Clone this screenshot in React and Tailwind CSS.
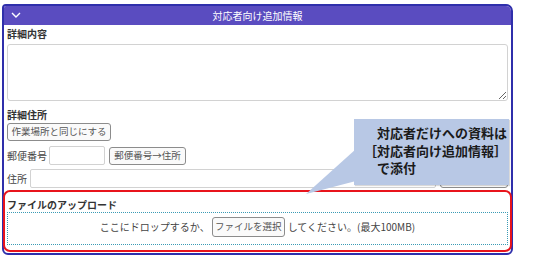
import React from 'react';

const font = { fontFamily: '"Noto Sans CJK JP", "Noto Sans", sans-serif' };

function Btn({ children, className = '' }) {
    return (
        <button className={`h-[18px] px-[3px] border border-[#8c8c8c] rounded-[3px] bg-[#fafafa] text-[9.5px] leading-none text-[#555] whitespace-nowrap flex items-center justify-center ${className}`}>
            {children}
        </button>
    );
}

export default function App() {
    return (
        <div className="relative w-[540px] h-[256px] bg-white overflow-hidden text-[#333]" style={font}>
            {/* panel */}
            <div className="ml-[2px] mt-[4px] w-[511px] h-[251px] border-2 border-[#2f2fab] rounded-tl-[4px] rounded-tr-[7px] rounded-b-[6px] flex flex-col">
                <div className="relative h-[19px] shrink-0 bg-[#5a4cc0] rounded-tr-[5px] rounded-tl-[2px] flex items-center justify-center text-white text-[10px] leading-none">
                    <svg className="absolute left-[7px] top-[6px]" width="10" height="6" viewBox="0 0 10 6">
                        <polyline points="1,1 5,5 9,1" fill="none" stroke="white" strokeWidth="1.4" />
                    </svg>
                    対応者向け追加情報
                </div>

                <div className="flex flex-col px-[3px] flex-1">
                    <div className="mt-[3px] h-[12px] text-[10px] leading-[12px] font-bold text-[#333]">詳細内容</div>
                    <textarea className="mt-[4px] h-[57px] w-full border border-[#d2d2d2] rounded-[3px] bg-white resize-y" />

                    <div className="mt-[8px] h-[12px] text-[10px] leading-[12px] font-bold text-[#333]">詳細住所</div>
                    <div className="mt-[2px] flex">
                        <Btn className="w-[104px]">作業場所と同じにする</Btn>
                    </div>

                    <div className="mt-[5px] flex items-center h-[19px] text-[10px]">
                        <span className="w-[42px] text-[#444]">郵便番号</span>
                        <input className="w-[56px] h-[19px] border border-[#d2d2d2] rounded-[2px]" />
                        <Btn className="ml-[4px] w-[77px]">郵便番号→住所</Btn>
                    </div>

                    <div className="mt-[4px] flex items-center h-[19px] text-[10px]">
                        <span className="w-[23px] text-[#444]">住所</span>
                        <input className="flex-1 h-[19px] border border-[#d2d2d2] rounded-[2px]" />
                        <Btn className="ml-[4px] w-[68px] h-[19px]">地図で確認</Btn>
                    </div>

                    {/* upload */}
                    <div className="mt-[2px] -mx-[4px] h-[62px] border-2 border-[#e8141c] rounded-[7px] bg-white flex flex-col px-[2px] pt-[7px]">
                        <div className="h-[12px] text-[10px] leading-[12px] font-bold text-[#333]">ファイルのアップロード</div>
                        <div className="mt-[1px] h-[33px] border border-dotted border-[#3a9bb5] flex items-center justify-center pb-[4px] text-[10px] text-[#444]">
                            <span>ここにドロップするか、</span>
                            <Btn className="ml-[2px] w-[73px] h-[20px]">ファイルを選択</Btn>
                            <span className="ml-[3px]">してください。(最大100MB)</span>
                        </div>
                    </div>
                </div>
            </div>

            {/* callout */}
            <svg className="absolute left-[300px] top-[145px]" width="60" height="52" viewBox="0 0 60 52">
                <polygon points="56,4 56,36 6,49" fill="#b8c8e5" />
            </svg>
            <div className="absolute left-[354px] top-[119px] w-[155px] h-[66px] bg-[#b8c8e5] shadow-[1px_1px_1px_rgba(0,0,0,0.15)] pl-[10px] pt-[5px] text-[13px] leading-[17.5px] font-semibold text-[#1a1a1a] whitespace-pre">
                <div>　対応者だけへの資料は</div>
                <div>［対応者向け追加情報］</div>
                <div>　で添付</div>
            </div>
        </div>
    );
}
